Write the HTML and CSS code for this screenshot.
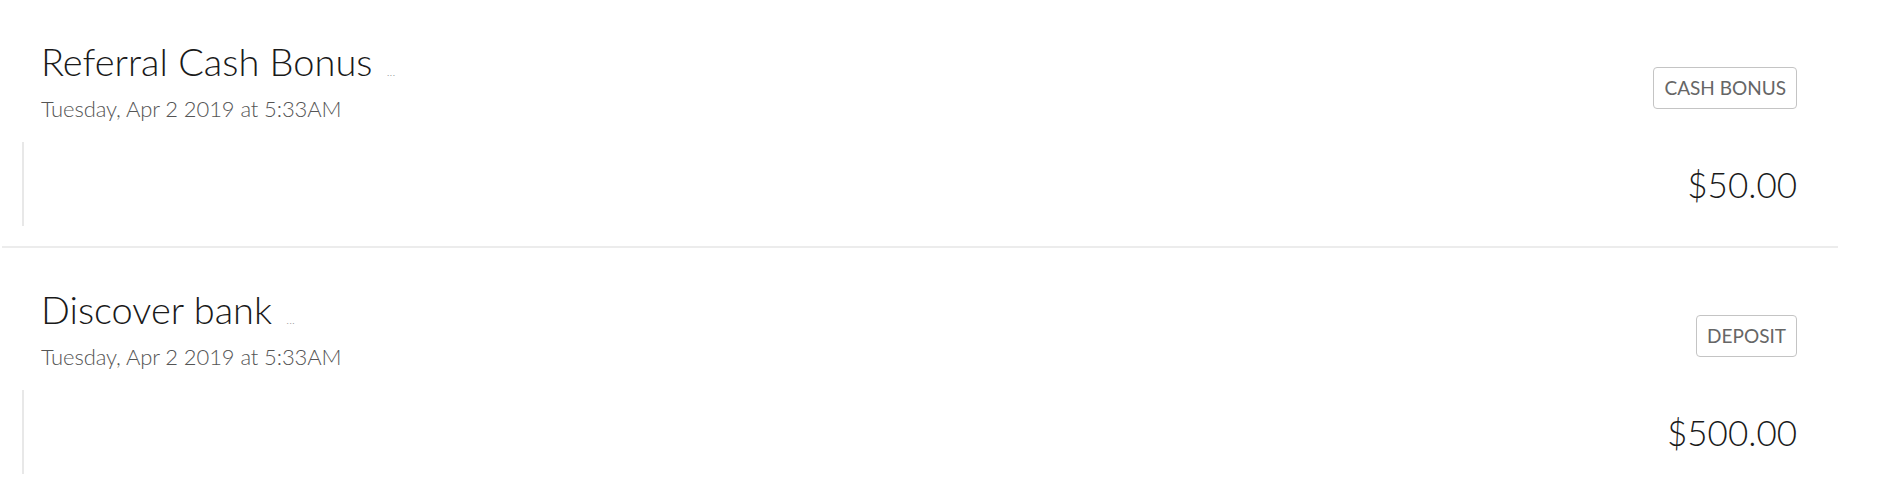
FILE: index.html
```html
<!DOCTYPE html>
<html lang="en">
<head>
    <meta charset="UTF-8">
    <meta name="viewport" content="width=device-width, initial-scale=1.0">
    <title>Transactions</title>
    <link rel="stylesheet" href="styles.css">
</head>
<body>
    <div class="feed">
        <div class="item">
            <div class="item-head">
                <div class="item-info">
                    <div class="item-title">Referral Cash Bonus <span class="more">...</span></div>
                    <div class="item-date">Tuesday, Apr 2 2019 at 5:33AM</div>
                </div>
                <span class="tag">Cash Bonus</span>
            </div>
            <div class="item-body">
                <div class="amount">$50.00</div>
            </div>
        </div>
        <div class="item">
            <div class="item-head">
                <div class="item-info">
                    <div class="item-title">Discover bank <span class="more">...</span></div>
                    <div class="item-date">Tuesday, Apr 2 2019 at 5:33AM</div>
                </div>
                <span class="tag">Deposit</span>
            </div>
            <div class="item-body">
                <div class="amount">$500.00</div>
            </div>
        </div>
    </div>
</body>
</html>
```

FILE: styles.css
```css
body {
    margin: 0;
    font-family: Lato, "Open Sans", sans-serif;
    font-weight: 300;
    background-color: #fff;
    color: #1a1a1a;
}
.feed {
    width: 1836px;
    margin-left: 2px;
}
.item {
    padding: 37px 0 20px;
    border-bottom: 2px solid #ececec;
}
.item-head {
    display: flex;
    justify-content: space-between;
    align-items: flex-start;
    padding: 0 41px 0 39px;
}
.item-title {
    font-size: 38px;
    line-height: 48px;
    height: 48px;
}
.more {
    font-size: 12px;
    line-height: 1;
    color: #999;
    margin-left: 4px;
}
.item-date {
    margin-top: 10px;
    font-size: 22px;
    line-height: 28px;
    letter-spacing: -0.1px;
    color: #555;
}
.tag {
    margin-top: 30px;
    padding: 8px 10px;
    font-size: 19px;
    line-height: 24px;
    font-weight: 400;
    text-transform: uppercase;
    color: #666;
    border: 1px solid #c4c4c4;
    border-radius: 4px;
}
.item-body {
    margin: 19px 41px 0 20px;
    padding: 18px 0;
    border-left: 2px solid #e8e8e8;
    text-align: right;
}
.amount {
    font-size: 35px;
    line-height: 48px;
}
```
